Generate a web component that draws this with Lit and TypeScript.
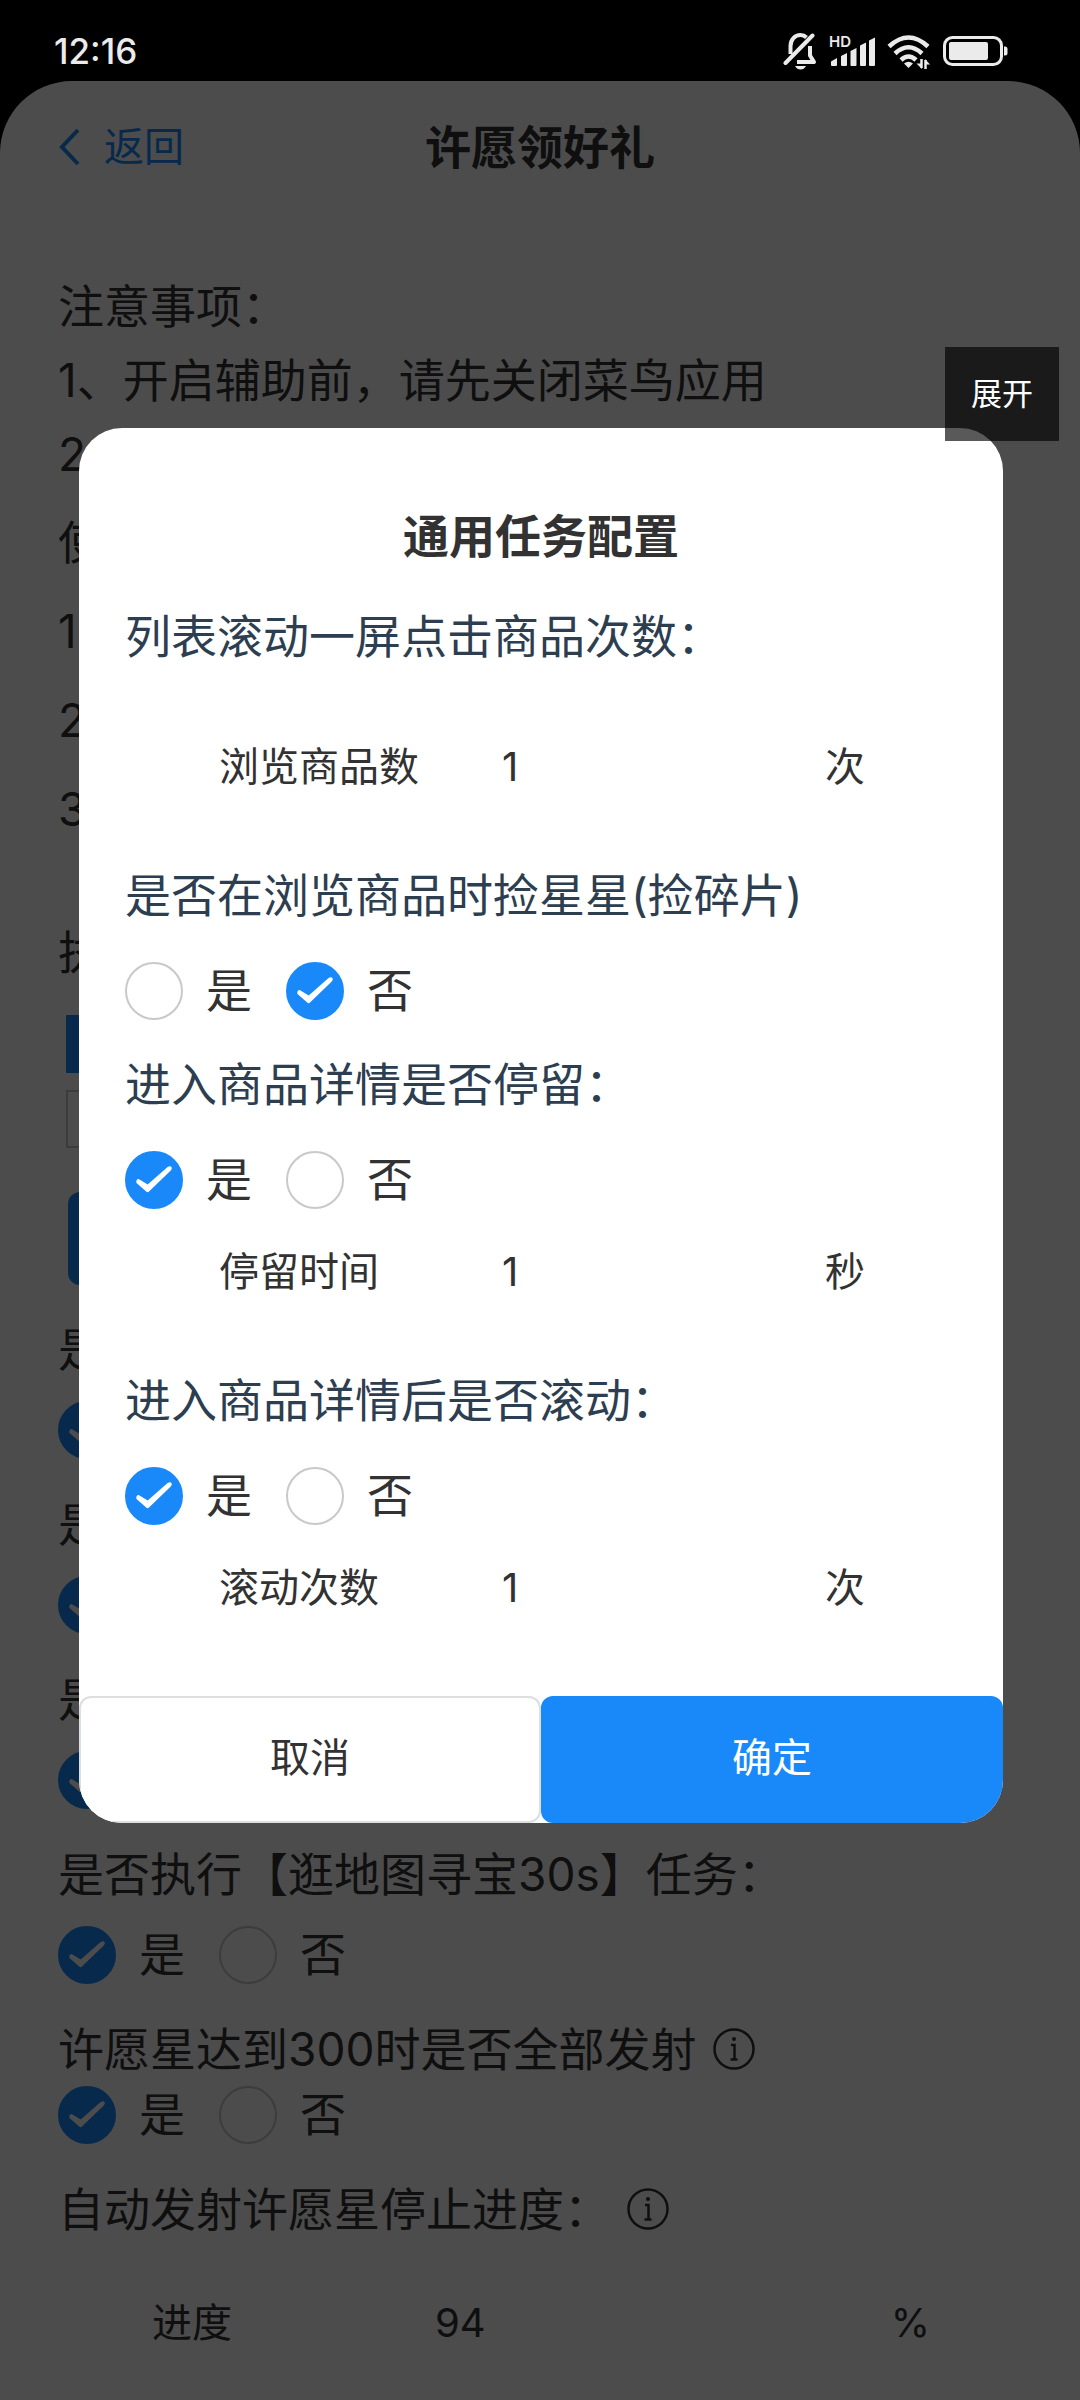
import { LitElement, html, css, nothing } from "lit";
import { customElement, property } from "lit/decorators.js";

const fieldStyles = css`
  * {
    box-sizing: border-box;
  }
`;

@customElement("yes-no")
class YesNo extends LitElement {
  @property() value = "yes";
  @property() name = "choice";
  @property({ type: Boolean }) bare = false;

  static styles = [
    fieldStyles,
    css`
      :host {
        display: block;
      }
      .row {
        display: flex;
        gap: 34px;
        height: 64px;
        margin: 0;
        padding: 0;
        border: 0;
      }
      .option {
        display: flex;
        align-items: center;
        gap: 23px;
        font-size: 46px;
        line-height: 62px;
        color: #323233;
      }
      .mark {
        display: grid;
        width: 58px;
        height: 58px;
      }
      .text {
        height: 64px;
      }
      .dot,
      .tick {
        grid-area: 1 / 1;
        width: 58px;
        height: 58px;
        margin: 0;
      }
      .dot {
        appearance: none;
        border: 2px solid #c8c9cc;
        border-radius: 50%;
        background: transparent;
      }
      .dot:checked {
        border-color: #1989fa;
        background: #1989fa;
      }
      .tick {
        display: none;
        fill: #fff;
        pointer-events: none;
      }
      .dot:checked + .tick {
        display: block;
      }
    `,
  ];

  private option(value: string, text: string) {
    return html`<label class="option">
      <span class="mark">
        <input class="dot" type="radio" name=${this.name} aria-label=${text} .checked=${this.value === value}
          @change=${() => (this.value = value)} />
        <svg class="tick" viewBox="0 0 58 58" aria-hidden="true">
          <path d="M14.5 28.4 22.7 33.6 42.6 16Q45 14.400 46.300 15.800 47.500 17.300 46 19.300L24 40.600Q22.600 41.800 21.200 40.500L11.800 32.300Q10.600 31 11.600 29.200 12.800 27.500 14.500 28.400Z" />
        </svg>
      </span>
      ${this.bare ? nothing : html`<span class="text">${text}</span>`}
    </label>`;
  }

  render() {
    return html`<div class="row" role="radiogroup">${this.option("yes", "是")}${this.option("no", "否")}</div>`;
  }
}

@customElement("number-field")
class NumberField extends LitElement {
  @property() label = "";
  @property() value = "";
  @property() unit = "";

  static styles = [
    fieldStyles,
    css`
      :host {
        display: block;
      }
      .row {
        display: flex;
        align-items: center;
        height: 96px;
        padding: 0 92px 0 94px;
        font-size: 40px;
        line-height: 56px;
        color: #323233;
      }
      .name {
        flex: none;
        width: 283px;
      }
      .box {
        flex: 1;
        min-width: 0;
        padding: 0;
        border: 0;
        outline: 0;
        background: transparent;
        font: inherit;
        color: inherit;
      }
    `,
  ];

  render() {
    return html`<div class="row">
      <label class="name" for="box">${this.label}</label>
      <input class="box" id="box" type="text" inputmode="numeric" .value=${this.value} />
      <span>${this.unit}</span>
    </div>`;
  }
}

const infoIcon = html`<svg class="info" viewBox="0 0 42 42" aria-hidden="true">
  <circle cx="21" cy="21" r="19.500" fill="none" stroke="currentColor" stroke-width="2.500" />
  <circle cx="21" cy="11" r="2" fill="currentColor" />
  <path d="M18 17h3.500v14M17.500 31.500h7" fill="none" stroke="currentColor" stroke-width="2.500" />
</svg>`;

interface Question {
  text: string;
  info?: boolean;
  tight?: boolean;
  bare?: boolean;
}

const questions: Question[] = [
  { text: "是", bare: true },
  { text: "是", bare: true },
  { text: "是", bare: true },
  { text: "是否执行【逛地图寻宝30s】任务：" },
  { text: "许愿星达到300时是否全部发射", info: true, tight: true },
];

@customElement("app-root")
class AppRoot extends LitElement {
  static styles = [
    fieldStyles,
    css`
      :host {
        display: block;
        position: relative;
        min-height: 100vh;
        overflow: hidden;
        background: #000;
        color: #323233;
        font-family: "Inter", "Noto Sans CJK SC", sans-serif;
      }
      .status {
        position: relative;
        z-index: 1;
        display: flex;
        align-items: center;
        justify-content: space-between;
        height: 81px;
        padding: 20px 72px 0 54px;
        color: #ebebeb;
        font-size: 35px;
        font-weight: 500;
      }
      .icons {
        display: flex;
        align-items: center;
        gap: 12px;
      }
      .icons svg {
        display: block;
        height: 38px;
      }
      .screen {
        min-height: calc(100vh - 81px);
        border-radius: 72px 72px 0 0;
        background: #fff;
      }
      .header {
        display: grid;
        grid-template-columns: 1fr auto 1fr;
        align-items: center;
        height: 132px;
        padding: 0 58px;
        line-height: 64px;
      }
      .back {
        display: flex;
        align-items: center;
        justify-self: start;
        gap: 24px;
        color: #1989fa;
        font-size: 40px;
        text-decoration: none;
      }
      .chevron {
        width: 22px;
        height: 38px;
      }
      .heading {
        margin: 0;
        font-size: 46px;
        font-weight: 700;
      }
      .content {
        padding: 56px 58px 28px;
        font-size: 46px;
      }
      .notices,
      .steps {
        margin: 0;
        line-height: 74px;
      }
      .steps {
        margin-top: 7px;
        line-height: 89px;
      }
      .question {
        display: flex;
        align-items: center;
        gap: 17px;
        margin: 0;
        font-size: 46px;
        font-weight: 400;
        line-height: 64px;
      }
      .modes {
        margin-top: 66px;
      }
      .checks {
        display: flex;
        flex-direction: column;
        gap: 17px;
        margin: 31px 8px 0;
      }
      .check {
        appearance: none;
        width: 58px;
        height: 58px;
        margin: 0;
        border: 2px solid #c8c9cc;
        background: #fff;
      }
      .check:checked {
        border-color: #1989fa;
        background: #1989fa;
      }
      .start {
        display: block;
        width: 50%;
        height: 93px;
        margin: 44px 10px 32px;
        border: 0;
        border-radius: 12px;
        background: #1989fa;
      }
      .item {
        margin-bottom: 30px;
      }
      .item yes-no {
        margin-top: 17px;
      }
      .item.tight yes-no {
        margin-top: 2px;
      }
      .progress {
        margin-top: 34px;
      }
      .info {
        width: 42px;
        height: 42px;
      }
      .overlay {
        position: absolute;
        inset: 0;
        padding: 428px 77px 0 79px;
        background: rgba(0, 0, 0, 0.7);
      }
      .dialog {
        overflow: hidden;
        border-radius: 43px;
        background: #fff;
      }
      .body {
        padding: 76px 46px 12px;
        color: #2c3e50;
      }
      .title {
        margin: 0 0 36px;
        color: #323233;
        font-size: 46px;
        font-weight: 700;
        line-height: 64px;
        text-align: center;
      }
      .body yes-no {
        margin: 32px 0 29px;
      }
      .body yes-no.with-field {
        margin-bottom: 12px;
      }
      .body number-field {
        margin-bottom: 48px;
      }
      .body number-field.lead {
        margin-top: 51px;
      }
      .actions {
        display: grid;
        grid-template-columns: 1fr 1fr;
      }
      .action {
        height: 127px;
        padding: 0 0 4px;
        border: 2px solid #dcdee0;
        border-radius: 12px;
        background: #fff;
        color: #323233;
        font-family: inherit;
        font-size: 40px;
        line-height: 56px;
      }
      .action.primary {
        border-color: #1989fa;
        background: #1989fa;
        color: #fff;
      }
      .expand {
        position: absolute;
        top: 347px;
        right: 21px;
        width: 114px;
        height: 94px;
        padding: 0;
        border: 0;
        background: rgba(0, 0, 0, 0.65);
        color: #fff;
        font-family: inherit;
        font-size: 31px;
        line-height: 44px;
      }
    `,
  ];

  private statusBar() {
    return html`<div class="status">
      <span>12:16</span>
      <div class="icons">
        <svg width="34" viewBox="0 0 34 38" fill="none" stroke="currentColor" stroke-width="4" stroke-linecap="round" stroke-linejoin="round">
          <path d="M7.500 22V14C7.500 7.500 12 3 17.500 3c2.500 0 4.500 1 6 2.500" stroke-linecap="butt" />
          <path d="M27 14v9.500L31 30H14" stroke-linecap="butt" />
          <path d="M2.500 31 29.500 3.500" />
          <path d="M12 34h11q-2 3.500-5.500 3.500t-5.500-3.500z" fill="currentColor" stroke="none" />
        </svg>
        <svg width="46" viewBox="0 0 46 38" fill="currentColor">
          <text x="0" y="15" font-size="15" font-weight="600">HD</text>
          <path d="M2 33v-3.500l6-3.500v7q0 1-1 1H3q-1 0-1-1zM12 24l6-3v12q0 1-1 1h-4q-1 0-1-1zM21.500 19l6-3v17q0 1-1 1h-4q-1 0-1-1zM31 13.500l6-3V33q0 1-1 1h-4q-1 0-1-1zM40 8.500l6-3V33q0 1-1 1h-4q-1 0-1-1z" />
        </svg>
        <svg width="44" viewBox="0 0 44 38" fill="none" stroke="currentColor" stroke-width="4.500">
          <path d="M2 14.500q19.500-18 39 0M8 21.500q13.500-12.500 27 0M14 28q7.500-7 15 0" />
          <path d="M17 31.500q4.500-3.500 9 0L21.500 36z" fill="currentColor" stroke="none" />
          <path d="M34.500 27v9M38.500 28v9" stroke-width="2.500" />
          <path d="M35 37l-5.500-5.500H35zM38 27l5 5.500h-5z" fill="currentColor" stroke="none" />
        </svg>
        <svg width="65" viewBox="0 0 65 38">
          <rect x="1.500" y="5.500" width="57" height="27" rx="8" fill="none" stroke="currentColor" stroke-width="3" />
          <rect x="6" y="10" width="39" height="18" rx="2" fill="currentColor" />
          <path d="M61 14.500h1q2.500 0 2.500 2.500v4q0 2.500-2.500 2.500h-1z" fill="currentColor" />
        </svg>
      </div>
    </div>`;
  }

  private page() {
    return html`<main class="screen">
      <header class="header">
        <a class="back" href="#">
          <svg class="chevron" viewBox="0 0 22 38" fill="none" stroke="currentColor" stroke-width="4" aria-hidden="true">
            <path d="M20 2 4 19l16 17" />
          </svg>
          返回
        </a>
        <h1 class="heading">许愿领好礼</h1>
      </header>
      <div class="content">
        <p class="notices">注意事项：<br />1、开启辅助前，请先关闭菜鸟应用<br />2</p>
        <p class="steps">使<br />1<br />2<br />3</p>
        <h2 class="question modes">执</h2>
        <div class="checks">
          <input class="check" type="checkbox" aria-label="模式一" checked />
          <input class="check" type="checkbox" aria-label="模式二" />
        </div>
        <button class="start" aria-label="开始"></button>
        ${questions.map(
          (q, i) => html`<section class="item ${q.tight ? "tight" : ""}">
            <h2 class="question">${q.text}${q.info ? infoIcon : nothing}</h2>
            <yes-no name="page-${i}" ?bare=${q.bare}></yes-no>
          </section>`
        )}
        <h2 class="question">自动发射许愿星停止进度：${infoIcon}</h2>
        <number-field class="progress" label="进度" value="94" unit="%"></number-field>
      </div>
    </main>`;
  }

  private dialog() {
    return html`<div class="overlay">
      <div class="dialog" role="dialog" aria-modal="true" aria-labelledby="dialog-title">
        <div class="body">
          <h2 class="title" id="dialog-title">通用任务配置</h2>
          <h3 class="question">列表滚动一屏点击商品次数：</h3>
          <number-field class="lead" label="浏览商品数" value="1" unit="次"></number-field>
          <h3 class="question">是否在浏览商品时捡星星(捡碎片)</h3>
          <yes-no name="pick" value="no"></yes-no>
          <h3 class="question">进入商品详情是否停留：</h3>
          <yes-no class="with-field" name="stay"></yes-no>
          <number-field label="停留时间" value="1" unit="秒"></number-field>
          <h3 class="question">进入商品详情后是否滚动：</h3>
          <yes-no class="with-field" name="scroll"></yes-no>
          <number-field label="滚动次数" value="1" unit="次"></number-field>
        </div>
        <div class="actions">
          <button class="action">取消</button>
          <button class="action primary">确定</button>
        </div>
      </div>
    </div>`;
  }

  render() {
    return html`${this.statusBar()}${this.page()}${this.dialog()}
      <button class="expand">展开</button>`;
  }
}
